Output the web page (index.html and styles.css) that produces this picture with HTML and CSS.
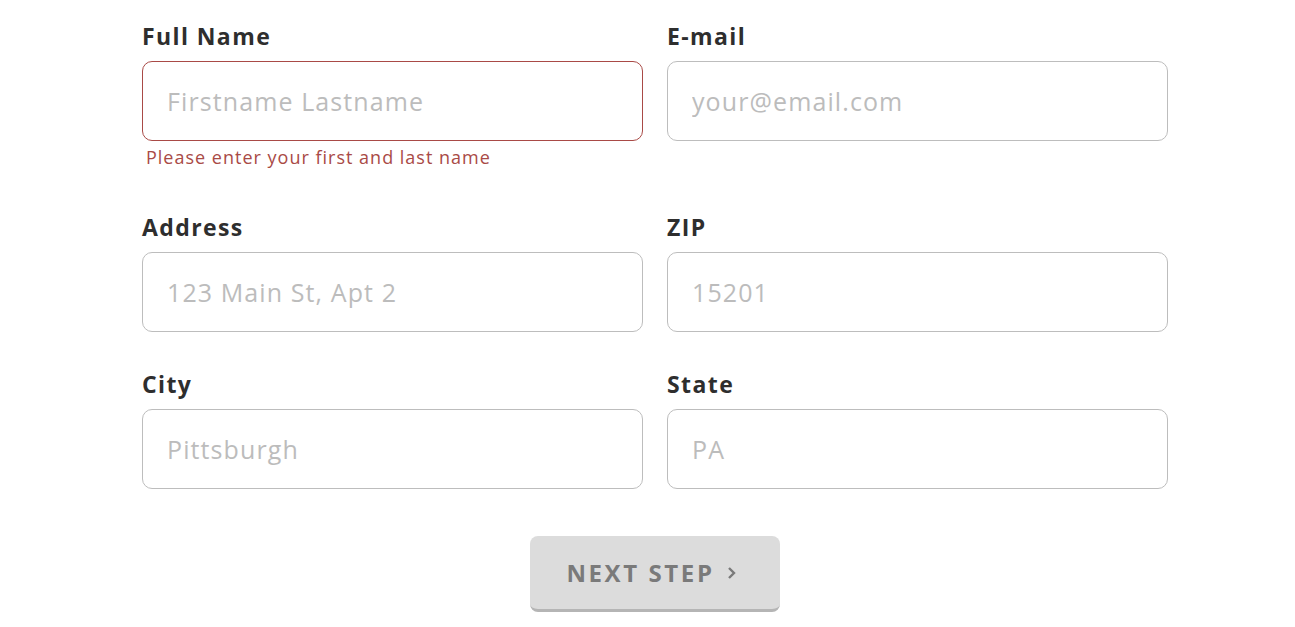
FILE: index.html
```html
<!DOCTYPE html>
<html lang="en">
<head>
  <meta charset="UTF-8" />
  <meta name="viewport" content="width=device-width, initial-scale=1.0" />
  <title>Shipping details</title>
  <link rel="stylesheet" href="styles.css">
</head>
<body>
  <form class="address-form" onsubmit="event.preventDefault()">
    <div class="fields">
      <div class="field has-error">
        <label for="fullName">Full Name</label>
        <input id="fullName" type="text" placeholder="Firstname Lastname">
        <p class="error">Please enter your first and last name</p>
      </div>
      <div class="field">
        <label for="email">E-mail</label>
        <input id="email" type="email" placeholder="your@email.com">
      </div>
      <div class="field">
        <label for="address">Address</label>
        <input id="address" type="text" placeholder="123 Main St, Apt 2">
      </div>
      <div class="field">
        <label for="zip">ZIP</label>
        <input id="zip" type="text" placeholder="15201">
      </div>
      <div class="field">
        <label for="city">City</label>
        <input id="city" type="text" placeholder="Pittsburgh">
      </div>
      <div class="field">
        <label for="state">State</label>
        <input id="state" type="text" placeholder="PA">
      </div>
    </div>

    <div class="actions">
      <button type="submit" class="next-step" disabled>
        NEXT STEP
        <svg class="chevron" width="9" height="14" viewBox="0 0 9 14"><polyline points="2,2 7,7 2,12" fill="none" stroke="currentColor" stroke-width="2.4"/></svg>
      </button>
    </div>
  </form>
</body>
</html>
```

FILE: styles.css
```css
body {
  background-color: #fff;
  color: #333;
  font-family: 'Open Sans', 'Lato', sans-serif;
  margin: 0;
  padding: 0;
}

.address-form {
  padding: 21px 127px 0 142px;
}

.fields {
  display: grid;
  grid-template-columns: 1fr 1fr;
  column-gap: 24px;
  row-gap: 37px;
}

.field label {
  display: block;
  font-size: 23px;
  font-weight: bold;
  letter-spacing: 1.4px;
  line-height: 30px;
  margin-bottom: 10px;
  color: #2e2e2e;
}

.field input {
  display: block;
  box-sizing: border-box;
  width: 100%;
  height: 80px;
  padding: 0 24px;
  border: 1px solid #bdbdbd;
  border-radius: 10px;
  font-family: inherit;
  font-size: 25px;
  letter-spacing: 1.1px;
  color: #333;
  outline: none;
}

.field input::placeholder {
  color: #bcbcbc;
}

.has-error input {
  border-color: #a94a46;
}

.error {
  margin: 4px 0 6px 4px;
  line-height: 24px;
  font-size: 18px;
  letter-spacing: 1px;
  color: #a94a46;
}

.actions {
  display: flex;
  justify-content: center;
  margin-top: 47px;
}

.next-step {
  display: flex;
  align-items: center;
  justify-content: center;
  gap: 12px;
  width: 250px;
  height: 76px;
  padding: 0 8px 0 0;
  background-color: #dcdcdc;
  border: none;
  border-bottom: 3px solid #b5b5b5;
  border-radius: 8px;
  color: #7a7a7a;
  font-family: inherit;
  font-size: 24px;
  font-weight: bold;
  letter-spacing: 2.6px;
  cursor: pointer;
}
```
